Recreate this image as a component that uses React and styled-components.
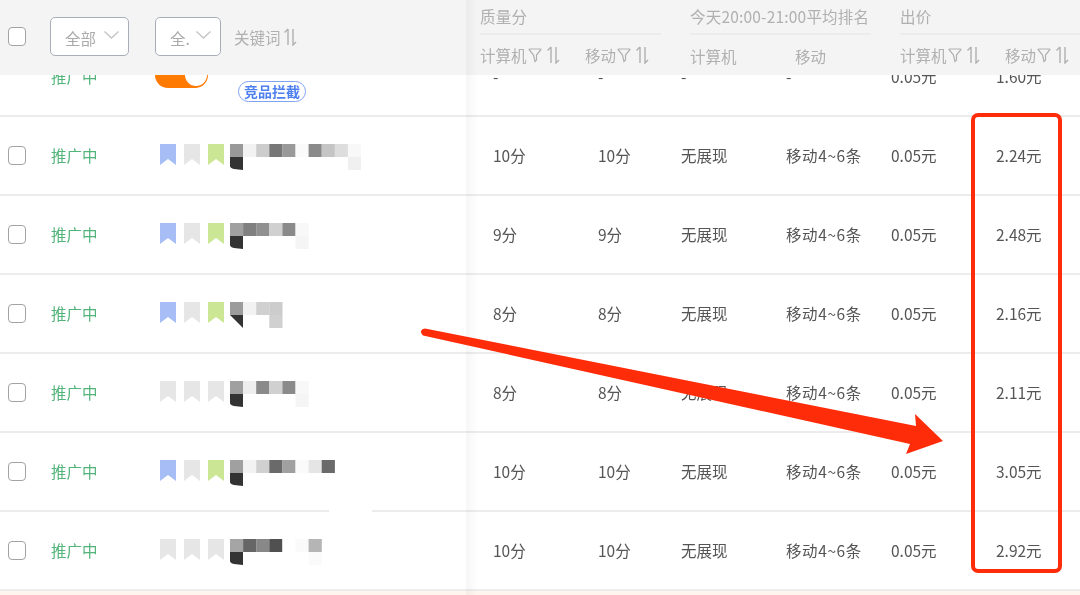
import styled, { createGlobalStyle } from "styled-components";

const rows = [
    { quality: "-", mobile: "-", rankPc: "-", rankMobile: "-", pc: "0.05元", price: "1.60元", first: true },
    { quality: "10分", mobile: "10分", price: "2.24元", marks: ["blue", "gray", "green"],
      top: ["#999", "#f2f2f2", "#ccc", "#777", "#999", "#fafafa", "#8a8a8a", "#c5c5c5", "#ddd", "#f8f8f8"],
      bottom: { 9: "#f0f0f0" } },
    { quality: "9分", mobile: "9分", price: "2.48元", marks: ["blue", "gray", "green"],
      top: ["#a0a0a0", "#808080", "#909090", "#d0d0d0", "#8a8a8a", "#f8f8f8"],
      bottom: { 5: "#f5f5f5" } },
    { quality: "8分", mobile: "8分", price: "2.16元", marks: ["blue", "gray", "green"], cut: true,
      top: ["#9c9c9c", "#f2f2f2", "#d0d0d0", "#ccc"],
      bottom: { 3: "#d0d0d0" } },
    { quality: "8分", mobile: "8分", price: "2.11元", marks: ["gray", "gray", "gray"],
      top: ["#a0a0a0", "#eee", "#8a8a8a", "#d0d0d0", "#8a8a8a", "#f8f8f8"],
      bottom: { 5: "#f5f5f5" } },
    { quality: "10分", mobile: "10分", price: "3.05元", marks: ["blue", "gray", "green"],
      top: ["#a0a0a0", "#f2f2f2", "#d0d0d0", "#6a6a6a", "#a0a0a0", "#fafafa", "#e5e5e5", "#6a6a6a"],
      bottom: {}, patch: true },
    { quality: "10分", mobile: "10分", price: "2.92元", marks: ["gray", "gray", "gray"],
      top: ["#a5a5a5", "#666", "#888", "#505050", "#fff", "#fafafa", "#b5b5b5"],
      bottom: { 6: "#fafafa" } },
];

const markColors = { blue: "#a6bef5", gray: "#e6e6e6", green: "#cbe695" };

function SortIcon() {
    return (
        <SortSvg viewBox="0 0 14 18">
            <path d="M5 1V17M5 1L1.5 4.5M10 1V17L13 14" />
        </SortSvg>
    );
}

function FilterIcon() {
    return (
        <FilterSvg viewBox="0 0 14 16">
            <path d="M1 2.500Q1 2 2 2H12Q13 2 13 2.500L8.500 8V13L7 14.500L5.500 8Z" />
        </FilterSvg>
    );
}

function Chevron() {
    return (
        <ChevronSvg viewBox="0 0 15 8">
            <path d="M0.5 0.5L7.500 7L14.500 0.5" />
        </ChevronSvg>
    );
}

function Bookmark({ color }) {
    return (
        <BookmarkSvg viewBox="0 0 16 21">
            <path d="M0 0H16V21L8 15L0 21Z" fill={markColors[color]} />
        </BookmarkSvg>
    );
}

// the keyword is pixelated in the source picture
function Mosaic({ top, bottom, cut }) {
    return (
        <MosaicSvg viewBox="0 0 144 26" width="144" height="26">
            {top.map((c, i) => <rect key={i} x={i * 13.1} y="0" width="13.2" height="13" fill={c} />)}
            {Object.keys(bottom).map(i => (
                <rect key={i} x={i * 13.1} y="13" width="13.2" height="13" fill={bottom[i]} />
            ))}
            {cut
                ? <path d="M0 13H13V26Z" fill="#333" />
                : <path d="M0 13H13V26L4 25Q0 24 0 22Z" fill="#333" />}
        </MosaicSvg>
    );
}

function Row({ row }) {
    return (
        <RowBox>
            <CheckCell>{!row.first && <CheckBox />}</CheckCell>
            <Status>推广中</Status>
            <NameCell>
                {row.first ? (
                    <>
                        <Toggle />
                        <Badge>竞品拦截</Badge>
                    </>
                ) : (
                    <>
                        <Marks>
                            {row.marks.map((m, i) => <Bookmark key={i} color={m} />)}
                        </Marks>
                        <Mosaic top={row.top} bottom={row.bottom} cut={row.cut} />
                    </>
                )}
            </NameCell>
            <Cell>{row.quality}</Cell>
            <Cell>{row.mobile}</Cell>
            <Cell>{row.rankPc || "无展现"}</Cell>
            <Cell $wide>{row.rankMobile || "移动4~6条"}</Cell>
            <Cell>{row.pc || "0.05元"}</Cell>
            <Cell>{row.price}</Cell>
            {row.patch && <LinePatch />}
        </RowBox>
    );
}

function HeadGroup({ title, first, second, plain }) {
    return (
        <Group>
            <GroupTitle>{title}</GroupTitle>
            <SubLabels>
                <SubLabel $plain={plain}>{first}{!plain && <><FilterIcon /><SortIcon /></>}</SubLabel>
                <SubLabel $plain={plain}>{second}{!plain && <><FilterIcon /><SortIcon /></>}</SubLabel>
            </SubLabels>
        </Group>
    );
}

function App() {
    return (
        <Page>
            <GlobalStyle />
            <Rows>
                {rows.map((row, i) => <Row key={i} row={row} />)}
                <PaleRow />
            </Rows>
            <Header>
                <HeadLeft>
                    <CheckBox />
                    <SelectBox $width={79}>全部<Chevron /></SelectBox>
                    <SelectBox $width={66}>全.<Chevron /></SelectBox>
                    <Keyword>关键词<SortIcon /></Keyword>
                </HeadLeft>
                <HeadRight>
                    <HeadGroup title="质量分" first="计算机" second="移动" />
                    <HeadGroup title="今天20:00-21:00平均排名" first="计算机" second="移动" plain />
                    <HeadGroup title="出价" first="计算机" second="移动" />
                </HeadRight>
            </Header>
            <PaneShadow />
            <RedBox />
            <ArrowSvg viewBox="0 0 1080 595" width="1080" height="595">
                <path
                    d="M425 328.5L916 426L915 414L943 441L906 454L910 444L423 335.5Q420.500 333 421 331Q422 328.500 425 328.5Z"
                    fill="#ff2c0a"
                />
            </ArrowSvg>
        </Page>
    );
}

const GlobalStyle = createGlobalStyle`
    html, body {
        margin: 0;
        padding: 0;
        background: #ffffff;
    }
    * {
        box-sizing: border-box;
    }
`;

const Page = styled.div`
    position: relative;
    width: 1080px;
    height: 595px;
    overflow: hidden;
    background: #ffffff;
    font-family: "Noto Sans CJK SC", "Noto Sans", sans-serif;
    font-size: 15.5px;
    color: #555555;
    filter: blur(0.3px);
`;

const Rows = styled.div`
    padding-top: 38px;
`;

const RowBox = styled.div`
    position: relative;
    display: grid;
    grid-template-columns: 51px 104px 338px 105px 83px 105px 105px 105px 84px;
    align-items: center;
    height: 79px;
    border-bottom: 2px solid #ececec;
`;

const PaleRow = styled.div`
    height: 10px;
    background: #fdf5ee;
`;

const CheckCell = styled.div`
    padding-left: 8px;
    display: flex;
`;

const CheckBox = styled.span`
    display: block;
    width: 18px;
    height: 19px;
    border: 1.5px solid #a3a3a3;
    border-radius: 4px;
    background: #ffffff;
    flex: none;
`;

const Status = styled.div`
    margin-top: -2px;
    color: #52b47a;
`;

const NameCell = styled.div`
    display: flex;
    align-items: center;
    height: 100%;
    position: relative;
`;

const Toggle = styled.span`
    position: relative;
    display: block;
    align-self: flex-start;
    width: 53px;
    height: 26px;
    margin-top: 24px;
    border-radius: 13px;
    background: #ff7a00;

    &::after {
        content: "";
        position: absolute;
        right: 1px;
        top: 2px;
        width: 22px;
        height: 22px;
        border-radius: 50%;
        background: #ffffff;
    }
`;

const Badge = styled.span`
    align-self: flex-start;
    margin: 43px 0 0 30px;
    height: 21px;
    padding: 0 5px;
    border: 1px solid #7fa4f5;
    border-radius: 11px;
    font-size: 14px;
    font-weight: 700;
    line-height: 18px;
    color: #4e80f0;
    white-space: nowrap;
`;

const Marks = styled.div`
    display: flex;
    gap: 8px;
    padding-left: 5px;
    margin-top: -3px;
`;

const BookmarkSvg = styled.svg`
    display: block;
    width: 16px;
    height: 21px;
`;

const MosaicSvg = styled.svg`
    display: block;
    margin: 2px 0 0 6px;
`;

const Cell = styled.div`
    margin-top: -2px;
    white-space: nowrap;
    letter-spacing: ${props => (props.$wide ? "0.6px" : "0")};
`;

const LinePatch = styled.span`
    position: absolute;
    left: 329px;
    bottom: -2px;
    width: 43px;
    height: 4px;
    background: #ffffff;
`;

const Header = styled.div`
    position: absolute;
    left: 0;
    top: 0;
    width: 100%;
    height: 75px;
    display: flex;
    background: #f4f4f4;
    color: #b0b0b0;
`;

const HeadLeft = styled.div`
    width: 480px;
    flex: none;
    display: flex;
    align-items: center;
    padding: 0 0 2px 8px;
`;

const SelectBox = styled.div`
    width: ${props => props.$width}px;
    height: 39px;
    flex: none;
    display: flex;
    align-items: center;
    justify-content: space-between;
    padding: 2px 9px 0 14px;
    border: 1.5px solid #a8adb9;
    border-radius: 5px;
    background: #ffffff;
    color: #aaaaaa;
    margin-left: 24px;

    & + & {
        margin-left: 26px;
    }
`;

const ChevronSvg = styled.svg`
    width: 15px;
    height: 8px;
    margin-top: -6px;
    flex: none;

    path {
        fill: none;
        stroke: #c4c4c4;
        stroke-width: 1.3;
    }
`;

const Keyword = styled.div`
    display: flex;
    align-items: center;
    gap: 2px;
    margin-left: 13px;
`;

const SortSvg = styled.svg`
    width: 14px;
    height: 18px;
    flex: none;

    path {
        fill: none;
        stroke: #b0b0b0;
        stroke-width: 1.4;
    }
`;

const FilterSvg = styled.svg`
    width: 14px;
    height: 16px;
    flex: none;
    margin: 0 4px 0 1px;

    path {
        fill: none;
        stroke: #b0b0b0;
        stroke-width: 1.2;
    }
`;

const HeadRight = styled.div`
    display: flex;
`;

const Group = styled.div`
    width: 210px;
    flex: none;
`;

const GroupTitle = styled.div`
    width: 181px;
    height: 35px;
    padding-top: 5px;
    line-height: 22px;
    letter-spacing: 0.2px;
    border-bottom: 2px solid #ececec;
    white-space: nowrap;
`;

const SubLabels = styled.div`
    display: grid;
    grid-template-columns: 105px 105px;
    padding-top: 8px;
`;

const SubLabel = styled.div`
    display: flex;
    align-items: center;
    height: 24px;
    margin-top: ${props => (props.$plain ? "1px" : "0")};
    white-space: nowrap;
`;

const PaneShadow = styled.div`
    position: absolute;
    left: 466px;
    top: 0;
    width: 12px;
    height: 595px;
    background: linear-gradient(to right, rgba(0, 0, 0, 0.035), rgba(0, 0, 0, 0));
`;

const RedBox = styled.div`
    position: absolute;
    left: 971px;
    top: 113px;
    width: 91px;
    height: 460px;
    border: 4px solid #ff2c0a;
    border-radius: 7px;
`;

const ArrowSvg = styled.svg`
    position: absolute;
    left: 0;
    top: 0;
    pointer-events: none;
`;

export default App;
